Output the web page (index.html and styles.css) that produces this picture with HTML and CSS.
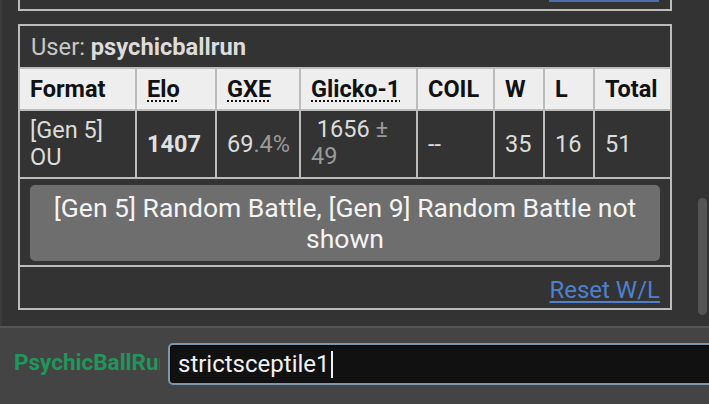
FILE: index.html
```html
<!DOCTYPE html>
<html>
<head>
<meta charset="utf-8">
<link rel="stylesheet" href="styles.css">
</head>
<body>
<div class="page">
  <div class="scroller">
    <div class="box box-top"><div class="top-btn"></div></div>
    <div class="box box-user">
      <div class="title">User: <strong>psychicballrun</strong></div>
      <table class="ladder">
        <colgroup>
          <col style="width:116px"><col style="width:80px"><col style="width:84px"><col style="width:117px"><col style="width:77px"><col style="width:50px"><col style="width:50px"><col>
        </colgroup>
        <thead>
          <tr>
            <th>Format</th>
            <th><abbr>Elo</abbr></th>
            <th><abbr>GXE</abbr></th>
            <th><abbr>Glicko-1</abbr></th>
            <th>COIL</th>
            <th>W</th>
            <th>L</th>
            <th>Total</th>
          </tr>
        </thead>
        <tbody>
          <tr class="data">
            <td>[Gen 5]<br>OU</td>
            <td class="elo">1407</td>
            <td>69<span class="dim">.4%</span></td>
            <td class="glicko">&nbsp;1656 <span class="dim">±<br>49</span></td>
            <td>--</td>
            <td>35</td>
            <td>16</td>
            <td>51</td>
          </tr>
          <tr class="notice-row">
            <td colspan="8"><div class="notice">[Gen 5] Random Battle, [Gen 9] Random Battle not shown</div></td>
          </tr>
          <tr class="reset-row">
            <td colspan="8"><a class="reset">Reset W/L</a></td>
          </tr>
        </tbody>
      </table>
    </div>
    <div class="scrollthumb"></div>
  </div>
  <div class="chatbar">
    <div class="username">PsychicBallRun</div>
    <div class="input"><span class="typed">strictsceptile1</span><span class="caret"></span></div>
  </div>
</div>
</body>
</html>
```

FILE: styles.css
```css
html, body {
  margin: 0;
  padding: 0;
  background: #333333;
  font-family: Roboto, "Liberation Sans", sans-serif;
}
.page {
  width: 709px;
  height: 404px;
  display: flex;
  flex-direction: column;
  overflow: hidden;
}
.scroller {
  position: relative;
  height: 326px;
  flex: none;
  border-left: 2px solid #3c3c3c;
  padding-left: 16px;
  box-sizing: border-box;
}
.box {
  width: 654px;
  box-sizing: border-box;
  border: 2px solid #bcbcbc;
}
.box-top {
  height: 11px;
  border-top: none;
  display: flex;
  justify-content: flex-end;
  padding-right: 11px;
}
.top-btn {
  width: 110px;
  height: 2px;
  background: #4a6ea8;
}
.box-user {
  margin-top: 13px;
}
.title {
  height: 41px;
  padding-left: 11px;
  font-size: 23.7px;
  line-height: 42px;
  color: #c8c8c8;
}
.title strong {
  color: #dcdcdc;
}
.ladder {
  width: 100%;
  border-collapse: collapse;
  table-layout: fixed;
}
.ladder th, .ladder td {
  border: 2px solid #bcbcbc;
  padding: 0 0 0 10px;
  text-align: left;
}
.ladder tr > :first-child { border-left: none; }
.ladder tr > :last-child { border-right: none; }
.ladder tr:last-child td { border-bottom: none; }
.ladder th {
  background: #eeeeee;
  color: #111;
  font-size: 23.5px;
  font-weight: bold;
  height: 40px;
  padding-top: 0;
  white-space: nowrap;
}
.ladder abbr {
  text-decoration: underline dotted;
  text-decoration-thickness: 2px;
  text-underline-offset: 3px;
}
.data td {
  height: 61px;
  font-size: 23.5px;
  line-height: 27px;
  color: #dcdcdc;
  vertical-align: middle;
}
.data td.elo {
  font-weight: bold;
  color: #e0e0e0;
}
.data td.glicko {
  vertical-align: top;
  padding-top: 5px;
}
.dim {
  color: #9a9a9a;
}
.notice-row td {
  padding: 6px 10px 4px 10px;
}
.notice {
  background: #6e6e6e;
  border-radius: 5px;
  color: #f4f4f4;
  font-size: 26.5px;
  line-height: 31px;
  text-align: center;
  padding: 7px 10px 7px;
}
.reset-row td {
  height: 41px;
  text-align: right;
  padding-right: 10px;
  vertical-align: middle;
}
.reset {
  color: #4d80cf;
  font-size: 24px;
  text-decoration: underline;
  text-underline-offset: 3px;
  position: relative;
  top: 2px;
}
.scrollthumb {
  position: absolute;
  left: 696px;
  top: 198px;
  width: 9px;
  height: 117px;
  border-radius: 5px;
  background: #555555;
}
.chatbar {
  flex: 1;
  background: #444444;
  border-top: 2px solid #555555;
  display: flex;
  align-items: flex-start;
  padding-top: 15px;
  gap: 8px;
  padding-left: 14px;
  overflow: hidden;
}
.username {
  flex: none;
  width: 146px;
  overflow: hidden;
  white-space: nowrap;
  color: #22955c;
  font-weight: bold;
  font-size: 22.5px;
  line-height: 38px;
}
.input {
  flex: none;
  width: 560px;
  height: 42px;
  box-sizing: border-box;
  border: 2px solid #7b96ad;
  border-radius: 5px;
  background: #111111;
  box-shadow: inset 0 1px 3px rgba(0,0,0,0.8);
  display: flex;
  align-items: center;
  padding-left: 8px;
  color: #f0f0f0;
  font-size: 24px;
}
.caret {
  display: inline-block;
  width: 2px;
  height: 27px;
  background: #f0f0f0;
  margin-left: 1px;
}
```
